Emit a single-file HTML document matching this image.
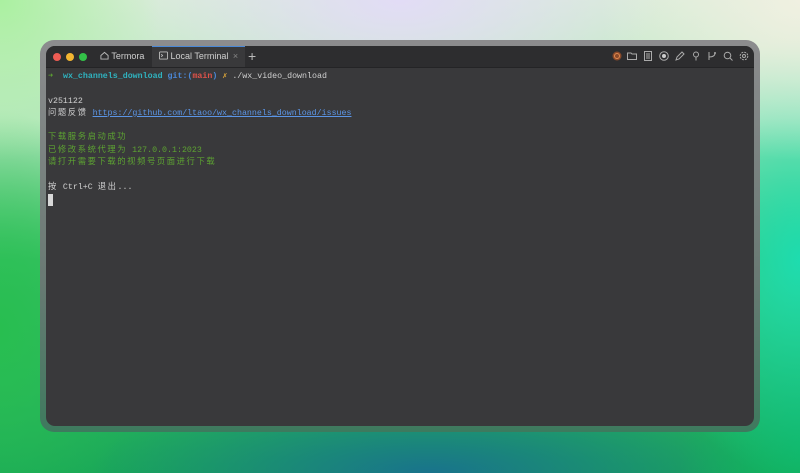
<!DOCTYPE html>
<html><head><meta charset="utf-8"><style>
html,body{margin:0;padding:0;width:800px;height:473px;overflow:hidden}
body{position:relative;background:linear-gradient(180deg,#d8ecd8 0%,#b8e8c0 25%,#3cc46a 55%,#1aa858 100%)}
.bg1{position:absolute;inset:0;background:
radial-gradient(ellipse 260px 120px at 400px 0px,rgba(226,220,246,1),rgba(226,220,246,0)),
radial-gradient(ellipse 200px 160px at 800px 0px,rgba(240,240,225,1),rgba(240,240,225,0)),
radial-gradient(ellipse 160px 160px at 0px 0px,rgba(170,240,160,1),rgba(170,240,160,0)),
radial-gradient(ellipse 160px 220px at 800px 260px,rgba(30,220,175,1),rgba(30,220,175,0)),
radial-gradient(ellipse 120px 180px at 800px 450px,rgba(15,180,100,1),rgba(15,180,100,0)),
radial-gradient(ellipse 140px 220px at 0px 330px,rgba(40,190,80,1),rgba(40,190,80,0)),
radial-gradient(ellipse 340px 90px at 430px 473px,rgba(25,115,140,1),rgba(25,115,140,0))}
.frame{position:absolute;left:40px;top:40px;width:720px;height:392px;border-radius:14px;background:linear-gradient(180deg,#8c8c8e,#6a7a74 60%,#3e7a5e)}
.win{position:absolute;left:46px;top:46px;width:708px;height:380px;border-radius:9px;background:#39393b;overflow:hidden}
.bar{height:21px;background:#2d2d2f;position:relative;border-bottom:1px solid #242426}
.dot{position:absolute;top:7px;width:8px;height:8px;border-radius:50%}
.tab{position:absolute;top:0;height:21px;font:9px "Liberation Sans",sans-serif;color:#cfcfcf;line-height:21px}
.term{position:absolute;left:2px;top:24px;font:8.3px/12.3px "Liberation Mono","Noto Sans CJK SC",monospace;color:#d0d0d0;white-space:pre}
.k{letter-spacing:1.6px}
.g{color:#5da332}.c{color:#2fb3c0;font-weight:bold}.b{color:#4a88d8;font-weight:bold}.r{color:#e0524a;font-weight:bold}.y{color:#d6a23a}
.l{color:#5b95e6;text-decoration:underline}
.ic{position:absolute;top:5px;width:10px;height:10px}
</style></head><body><div class="bg1"></div>
<div class="frame"></div>
<div class="win">
<div class="bar">
<div class="dot" style="left:7px;background:#ee5c54"></div>
<div class="dot" style="left:20px;background:#f3b531"></div>
<div class="dot" style="left:33px;background:#33c148"></div>
<div class="tab" style="left:54px"><svg width="9" height="9" viewBox="0 0 10 10" style="vertical-align:-1px"><path d="M1 5L5 1.5 9 5V9H1Z" fill="none" stroke="#bbb" stroke-width="1"/></svg> Termora</div>
<div style="position:absolute;left:106px;top:0;width:93px;height:21px;background:#39393b;border-top:1px solid #4a88d8;box-sizing:border-box"></div>
<div class="tab" style="left:113px"><svg width="9" height="9" viewBox="0 0 10 10" style="vertical-align:-1px"><rect x=".5" y="1" width="9" height="8" rx="1" fill="none" stroke="#bbb"/><path d="M2.5 3.5L4 5 2.5 6.5" fill="none" stroke="#bbb"/></svg> Local Terminal <span style="color:#888;margin-left:2px">×</span></div>
<div class="tab" style="left:202px;font-size:14px;color:#bbb">+</div>
<svg class="ic" style="left:566px" viewBox="0 0 10 10"><circle cx="5" cy="5" r="4.5" fill="#8a4a2a"/><circle cx="5" cy="5" r="2.5" fill="none" stroke="#e08a50"/></svg>
<svg class="ic" style="left:581px" viewBox="0 0 10 10"><path d="M.5 2H4L5 3H9.5V8.5H.5Z" fill="none" stroke="#aaa"/></svg>
<svg class="ic" style="left:597px" viewBox="0 0 10 10"><rect x="1.5" y=".5" width="7" height="9" fill="none" stroke="#aaa"/><path d="M3 3H7M3 5H7M3 7H7" stroke="#aaa"/></svg>
<svg class="ic" style="left:613px" viewBox="0 0 10 10"><circle cx="5" cy="5" r="4.3" fill="none" stroke="#aaa"/><circle cx="5" cy="5" r="2" fill="#ccc"/></svg>
<svg class="ic" style="left:629px" viewBox="0 0 10 10"><path d="M1 9L2 6 7 1 9 3 4 8Z" fill="none" stroke="#aaa"/></svg>
<svg class="ic" style="left:645px" viewBox="0 0 10 10"><circle cx="5" cy="3.5" r="2.5" fill="none" stroke="#aaa"/><path d="M5 6V9.5" stroke="#aaa"/></svg>
<svg class="ic" style="left:661px" viewBox="0 0 10 10"><path d="M2 1V9M2 6Q8 6 8 2" fill="none" stroke="#aaa"/><circle cx="8" cy="2" r="1" fill="#aaa"/></svg>
<svg class="ic" style="left:677px" viewBox="0 0 10 10"><circle cx="4.5" cy="4.5" r="3.3" fill="none" stroke="#aaa"/><path d="M7 7L9.5 9.5" stroke="#aaa"/></svg>
<svg class="ic" style="left:693px" viewBox="0 0 10 10"><circle cx="5" cy="5" r="3.8" fill="none" stroke="#aaa" stroke-dasharray="2 1"/><circle cx="5" cy="5" r="1.5" fill="none" stroke="#aaa"/></svg>
</div>
<div class="term" style="top:25px"><span class="g">➜</span>  <span class="c">wx_channels_download</span> <span class="b">git:(</span><span class="r">main</span><span class="b">)</span> <span class="y">✗</span> ./wx_video_download

v251122
<span class="k">问题反馈</span> <span class="l">https://github.com/ltaoo/wx_channels_download/issues</span>

<span class="g"><span class="k">下载服务启动成功</span>
<span class="k">已修改系统代理为</span> 127.0.0.1:2023
<span class="k">请打开需要下载的视频号页面进行下载</span></span>

<span class="k">按</span> Ctrl+C <span class="k">退出</span>...
<span style="display:inline-block;width:5px;height:12px;background:#d8d8d8;vertical-align:-2px"></span></div>
</div>
</body></html>
